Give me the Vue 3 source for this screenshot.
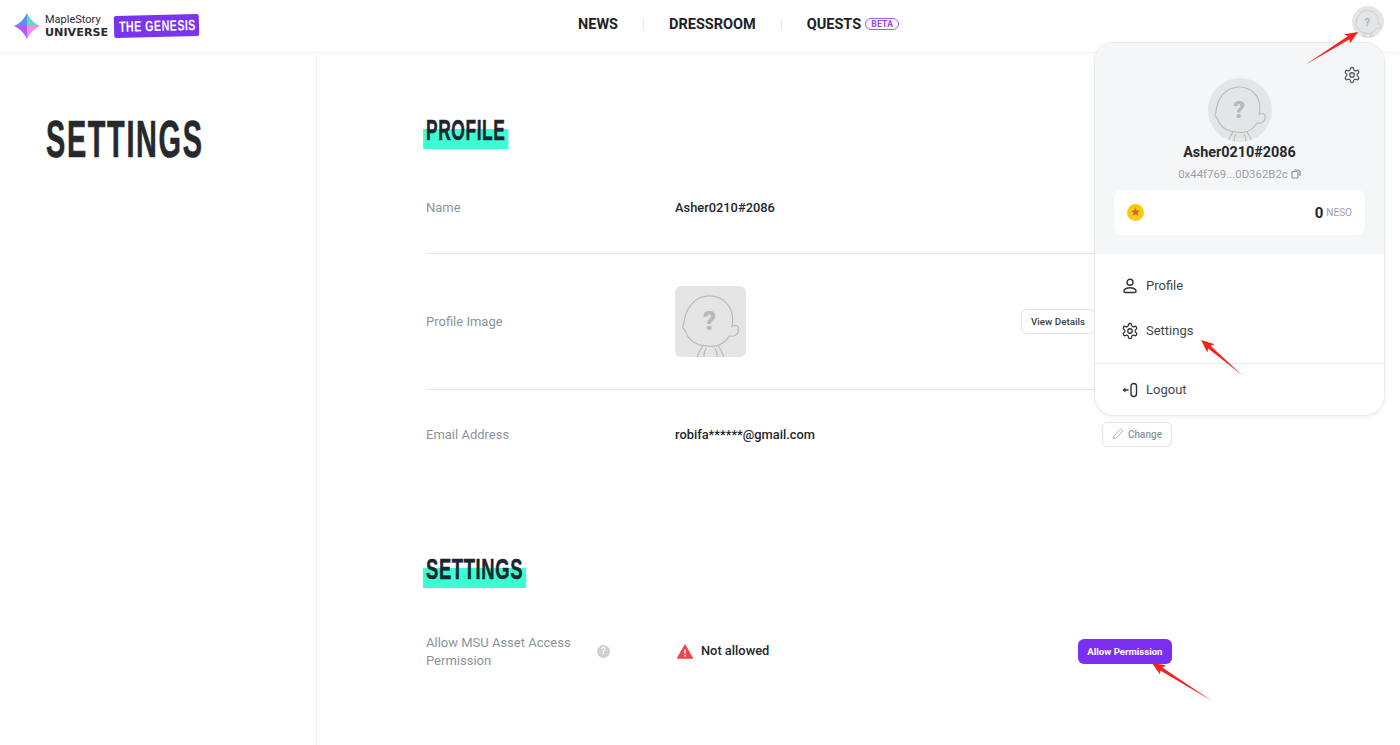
<template>
  <div class="page">
    <svg class="symbols" width="0" height="0">
      <symbol id="baby" viewBox="0 0 64 64">
        <path class="baby-line" d="M22 53C15 51 11 46 9 40 7 39 6 36 8 34 9 19 19 9 31 9c12 0 21 9 21 21 0 3 0 5-1 7 3-3 7-1 6 3 0 4-4 6-8 5-3 5-7 8-12 9-5 1-10 0-15-1z" />
        <path class="baby-line" d="M25 54l-3 5-2 5M39 54l3 5 2 5M28 56c-2 3-2 5-2 8M36 56c2 3 2 5 2 8" />
      </symbol>
      <symbol id="gear" viewBox="0 0 24 24">
        <path fill="none" stroke="currentColor" stroke-width="1.7" d="M12.22 2h-.44a2 2 0 0 0-2 2v.18a2 2 0 0 1-1 1.73l-.43.25a2 2 0 0 1-2 0l-.15-.08a2 2 0 0 0-2.73.73l-.22.38a2 2 0 0 0 .73 2.73l.15.1a2 2 0 0 1 1 1.72v.51a2 2 0 0 1-1 1.74l-.15.09a2 2 0 0 0-.73 2.73l.22.38a2 2 0 0 0 2.73.73l.15-.08a2 2 0 0 1 2 0l.43.25a2 2 0 0 1 1 1.73V20a2 2 0 0 0 2 2h.44a2 2 0 0 0 2-2v-.18a2 2 0 0 1 1-1.73l.43-.25a2 2 0 0 1 2 0l.15.08a2 2 0 0 0 2.73-.73l.22-.39a2 2 0 0 0-.73-2.73l-.15-.08a2 2 0 0 1-1-1.74v-.5a2 2 0 0 1 1-1.74l.15-.09a2 2 0 0 0 .73-2.73l-.22-.38a2 2 0 0 0-2.73-.73l-.15.08a2 2 0 0 1-2 0l-.43-.25a2 2 0 0 1-1-1.73V4a2 2 0 0 0-2-2z" />
        <circle cx="12" cy="12" r="3" fill="none" stroke="currentColor" stroke-width="1.7" />
      </symbol>
    </svg>

    <header class="topbar">
      <div class="logo">
        <svg class="logo-star" viewBox="0 0 26 26">
          <path d="M13 0Q9 9 0 13h13z" fill="#5a8ff6" />
          <path d="M13 0q4 9 13 13H13z" fill="#5fdcc0" />
          <path d="M26 13q-9 4-13 13V13z" fill="#f08cf2" />
          <path d="M0 13q9 4 13 13V13z" fill="#ab5ff2" />
        </svg>
        <div class="logo-words">
          <span class="logo-maple">MapleStory</span>
          <span class="logo-universe">UNIVERSE</span>
        </div>
        <div class="logo-tag"><span>THE GENESIS</span></div>
      </div>
      <nav class="nav">
        <a class="nav-link">NEWS</a>
        <i class="nav-sep"></i>
        <a class="nav-link">DRESSROOM</a>
        <i class="nav-sep"></i>
        <a class="nav-link">QUESTS</a>
        <span class="beta">BETA</span>
      </nav>
      <div class="avatar-small">
        <svg class="fill" viewBox="0 0 64 64">
          <use href="#baby" width="64" height="64" />
          <text x="31" y="40" class="baby-mark">?</text>
        </svg>
      </div>
    </header>

    <div class="body">
      <aside class="side">
        <h1 class="side-title">SETTINGS</h1>
      </aside>
      <main class="content">
        <section class="section">
          <h2 class="sec-title">PROFILE</h2>
          <div class="row row-name">
            <div class="row-label">Name</div>
            <div class="row-value">Asher0210#2086</div>
          </div>
          <div class="row row-image">
            <div class="row-label">Profile Image</div>
            <div class="profile-pic">
              <svg class="fill" viewBox="0 0 64 64">
                <use href="#baby" width="64" height="64" />
                <text x="31" y="40" class="baby-mark">?</text>
              </svg>
            </div>
            <div class="row-actions actions-under-menu">
              <button class="btn btn-details">View Details</button>
            </div>
          </div>
          <div class="row row-email">
            <div class="row-label">Email Address</div>
            <div class="row-value">robifa******@gmail.com</div>
            <div class="row-actions">
              <button class="btn btn-muted">
                <svg class="pencil" viewBox="0 0 12 12">
                  <path d="M1.5 10.5l.6-2.8L8 1.8c.5-.5 1.2-.5 1.7 0l.5.5c.5.5.5 1.2 0 1.7L4.300 9.900z" />
                </svg>
                Change
              </button>
            </div>
          </div>
        </section>

        <section class="section section-settings">
          <h2 class="sec-title sec-title-wide">SETTINGS</h2>
          <div class="row row-perm">
            <div class="row-label label-help">
              <span class="label-text">Allow MSU Asset Access Permission</span>
              <span class="help">?</span>
            </div>
            <div class="row-value status">
              <svg class="warn" viewBox="0 0 16 15">
                <path d="M8 .8L15.700 14.200H.3z" fill="#ef4452" stroke="#ef4452" stroke-linejoin="round" />
                <path d="M8 5.500v4.200M8 11v1.500" stroke="#fff" stroke-width="1.500" />
              </svg>
              Not allowed
            </div>
            <div class="row-actions">
              <button class="btn btn-primary">Allow Permission</button>
            </div>
          </div>
        </section>
      </main>
    </div>

    <div class="menu">
      <div class="menu-top">
        <svg class="menu-gear"><use href="#gear" /></svg>
        <div class="avatar-big">
          <svg class="fill" viewBox="0 0 64 64">
            <use href="#baby" width="64" height="64" />
            <text x="31" y="40" class="baby-mark">?</text>
          </svg>
        </div>
        <div class="menu-name">Asher0210#2086</div>
        <div class="menu-addr">
          0x44f769...0D362B2c
          <svg class="copy" viewBox="0 0 10 10">
            <rect x="1" y="2.500" width="6" height="6.500" rx="1" />
            <path d="M3 1h4.500L9 2.500V7" />
          </svg>
        </div>
        <div class="neso">
          <span class="coin">★</span>
          <span class="neso-amount">0</span>
          <span class="neso-unit">NESO</span>
        </div>
      </div>
      <div class="menu-list">
        <a class="menu-item">
          <svg class="menu-icon" viewBox="0 0 16 16">
            <circle cx="8" cy="4.300" r="3" />
            <path d="M3.500 14.500h9c1.200 0 1.700-.8 1.500-1.700-.5-1.800-2.800-3.100-6-3.100s-5.500 1.300-6 3.100c-.2.900.3 1.700 1.500 1.700z" />
          </svg>
          Profile
        </a>
        <a class="menu-item">
          <svg class="menu-icon gear-dark"><use href="#gear" /></svg>
          Settings
        </a>
      </div>
      <div class="menu-foot">
        <a class="menu-item">
          <svg class="menu-icon" viewBox="0 0 16 16">
            <path d="M6.500 8H2" />
            <path class="arrow-head" d="M3.500 5.500L.5 8l3 2.500z" />
            <rect x="9" y="1.500" width="5.500" height="13" rx="2.700" />
          </svg>
          Logout
        </a>
      </div>
    </div>

    <svg class="marks" width="1400" height="745">
      <polygon v-for="(a, i) in arrows" :key="i" :points="arrowPoints(a)" fill="#f5211c" />
    </svg>
  </div>
</template>

<script setup>
const arrows = [
  { from: [1305, 65], to: [1358, 32] },
  { from: [1242, 375], to: [1201, 340] },
  { from: [1212, 701], to: [1152, 663] }
]

// thin tail, fat head, with the small notch a screenshot tool draws
function arrowPoints({ from, to }) {
  const dx = to[0] - from[0]
  const dy = to[1] - from[1]
  const len = Math.hypot(dx, dy)
  const ux = dx / len
  const uy = dy / len
  const at = (back, side) => {
    const x = to[0] - ux * back - uy * side
    const y = to[1] - uy * back + ux * side
    return `${x.toFixed(1)},${y.toFixed(1)}`
  }
  return [
    `${from[0]},${from[1]}`,
    at(11, -1.8),
    at(13, -5.5),
    at(0, 0),
    at(13, 5.5),
    at(11, 1.8)
  ].join(' ')
}
</script>

<style>
html,
body {
  margin: 0;
  overflow: hidden;
  background: #fff;
}
</style>

<style scoped>
.page {
  position: relative;
  width: 1400px;
  height: 745px;
  overflow: hidden;
  background: #fff;
  font-family: Roboto, "Liberation Sans", sans-serif;
  color: #23272c;
}

.symbols {
  position: absolute;
}

.baby-line {
  fill: none;
  stroke: #b9babc;
  stroke-width: 1.1;
}

.baby-mark {
  font-family: Roboto, sans-serif;
  font-size: 23px;
  font-weight: 900;
  text-anchor: middle;
  fill: #b5b8bd;
}

.fill {
  display: block;
  width: 100%;
  height: 100%;
}

.topbar {
  display: flex;
  align-items: center;
  height: 53px;
  box-sizing: border-box;
  border-bottom: 1px solid #f0f1f2;
  padding-left: 14px;
  padding-right: 16px;
}

.logo {
  display: flex;
  align-items: center;
  width: 564px;
  flex: none;
}

.logo-star {
  width: 26px;
  height: 26px;
  flex: none;
}

.logo-words {
  display: flex;
  flex-direction: column;
  margin-left: 5px;
  width: 69px;
}

.logo-maple {
  font-size: 11px;
  line-height: 12px;
  color: #2b2b30;
}

.logo-universe {
  font-family: "DejaVu Sans", sans-serif;
  font-size: 11.200px;
  line-height: 13px;
  font-weight: 700;
  color: #2b2b30;
  white-space: nowrap;
}

.logo-tag {
  width: 85px;
  height: 22px;
  line-height: 22px;
  background: #7a34ee;
  border-radius: 2px;
  transform: rotate(-1.500deg);
  color: #fff;
}

.logo-tag span {
  display: inline-block;
  margin-left: 5px;
  font-family: "Liberation Sans", sans-serif;
  font-weight: 700;
  font-size: 15px;
  letter-spacing: 0.6px;
  white-space: nowrap;
  transform: scaleX(0.715);
  transform-origin: left center;
}

.nav {
  display: flex;
  align-items: center;
  margin-bottom: 4px;
}

.nav-link {
  font-size: 14.500px;
  font-weight: 700;
  color: #1e2226;
}

.nav-sep {
  width: 1px;
  height: 10px;
  margin: 2px 25px 0;
  background: #e4e5e7;
}

.beta {
  margin-left: 4px;
  width: 34px;
  height: 12px;
  box-sizing: border-box;
  border: 1px solid #9b5cf5;
  border-radius: 6px;
  font-size: 8.500px;
  line-height: 10px;
  font-weight: 700;
  letter-spacing: 0.3px;
  text-align: center;
  color: #8a45f0;
}

.avatar-small {
  margin-left: auto;
  margin-bottom: 8px;
  width: 32px;
  height: 32px;
  border-radius: 50%;
  background: #e4e5e6;
  overflow: hidden;
}

.body {
  display: flex;
  height: 692px;
}

.side {
  width: 317px;
  box-sizing: border-box;
  border-right: 1px solid #eff0f1;
  padding: 60px 0 0 46px;
  flex: none;
}

.side-title {
  margin: 0;
  font-family: "Liberation Sans", sans-serif;
  font-size: 52px;
  line-height: 52px;
  font-weight: 700;
  letter-spacing: 3px;
  color: #25292e;
  -webkit-text-stroke: 0.7px #25292e;
  transform: scaleX(0.555);
  transform-origin: left center;
  white-space: nowrap;
}

.content {
  width: 746px;
  margin-left: 109px;
}

.section {
  padding-top: 62px;
}

.section-settings {
  padding-top: 76px;
}

.sec-title {
  position: relative;
  display: inline-block;
  margin: 0;
  height: 32px;
  font-family: "Liberation Sans", sans-serif;
  font-size: 30px;
  line-height: 30px;
  font-weight: 700;
  letter-spacing: 1px;
  color: #1c2530;
  -webkit-text-stroke: 0.5px #1c2530;
  transform: scaleX(0.58);
  transform-origin: left center;
  white-space: nowrap;
  z-index: 0;
}

.sec-title-wide {
  transform: scaleX(0.615);
}

.sec-title::after {
  content: "";
  position: absolute;
  left: -5px;
  right: -5px;
  top: 14px;
  height: 20px;
  background: #3dfdd2;
  z-index: -1;
}

.row {
  display: grid;
  grid-template-columns: 249px 1fr auto;
  align-items: center;
  font-size: 13px;
}

.row + .row {
  border-top: 1px solid #e6e7e9;
}

.row-name {
  height: 92px;
  margin-top: 14px;
}

.row-image {
  height: 135px;
}

.row-email {
  height: 88px;
}

.row-perm {
  height: 62px;
  margin-top: 34px;
}

.row-label {
  padding-top: 1px;
  color: #8d939b;
  line-height: 18px;
}

.row-value {
  font-weight: 500;
  font-size: 12.850px;
  color: #23272c;
}

.label-help {
  display: flex;
  align-items: center;
}

.label-text {
  width: 160px;
}

.help {
  width: 13px;
  height: 13px;
  margin-left: 11px;
  border-radius: 50%;
  background: #cdd0d4;
  color: #fff;
  font-size: 9px;
  line-height: 13px;
  font-weight: 700;
  text-align: center;
}

.status {
  display: flex;
  align-items: center;
  gap: 8px;
  padding-left: 2px;
  margin-bottom: 2px;
}

.warn {
  width: 16px;
  height: 15px;
  margin-top: 3px;
}

.profile-pic {
  width: 71px;
  height: 71px;
  border-radius: 6px;
  background: #e5e5e6;
  overflow: hidden;
}

.row-actions {
  display: flex;
  gap: 8px;
}

.actions-under-menu {
  padding-right: 77px;
}

.btn {
  display: flex;
  align-items: center;
  height: 25px;
  padding: 0 9px;
  box-sizing: border-box;
  border: 1px solid #e3e5e8;
  border-radius: 5px;
  background: #fff;
  font-family: Roboto, sans-serif;
  font-size: 10px;
  font-weight: 500;
  color: #3a3f45;
}

.btn-details {
  font-size: 9.800px;
}

.btn-muted {
  gap: 4px;
  color: #8d939b;
}

.pencil {
  width: 12px;
  height: 12px;
  fill: none;
  stroke: #a3a8ae;
  stroke-width: 0.9;
}

.btn-primary {
  border: none;
  border-radius: 6px;
  padding: 0 9.500px;
  background: #7b2ff0;
  color: #fff;
  font-size: 9.600px;
  font-weight: 700;
}

.menu {
  position: absolute;
  left: 1094px;
  top: 42px;
  width: 291px;
  height: 374px;
  box-sizing: border-box;
  border: 1px solid #e9eaec;
  border-radius: 20px;
  background: #fff;
  overflow: hidden;
  box-shadow: 0 1px 4px rgba(0, 0, 0, 0.06);
}

.menu-top {
  position: relative;
  display: flex;
  flex-direction: column;
  align-items: center;
  height: 211px;
  padding-top: 35px;
  box-sizing: border-box;
  background: #f5f6f8;
}

.menu-gear {
  position: absolute;
  right: 23px;
  top: 23px;
  width: 18px;
  height: 18px;
  color: #555a60;
}

.avatar-big {
  width: 64px;
  height: 64px;
  border-radius: 50%;
  background: #e4e5e6;
  overflow: hidden;
}

.menu-name {
  margin-top: 2px;
  font-size: 14.400px;
  line-height: 18px;
  font-weight: 700;
  color: #25292e;
}

.menu-addr {
  display: flex;
  align-items: center;
  gap: 3px;
  margin-top: 5px;
  font-size: 11.400px;
  line-height: 14px;
  color: #9aa0a7;
}

.copy {
  width: 10px;
  height: 10px;
  fill: none;
  stroke: #8d939b;
  stroke-width: 1.200;
}

.neso {
  display: flex;
  align-items: center;
  width: 251px;
  height: 45px;
  margin-top: 9px;
  padding: 0 13px;
  box-sizing: border-box;
  border-radius: 8px;
  background: #fff;
}

.coin {
  width: 17px;
  height: 17px;
  border-radius: 50%;
  background: #fbc913;
  color: #d0603a;
  font-size: 12px;
  line-height: 17px;
  text-align: center;
}

.neso-amount {
  margin-left: auto;
  font-size: 15px;
  font-weight: 700;
  color: #23272c;
}

.neso-unit {
  margin-left: 3px;
  font-size: 10px;
  color: #9aa0a7;
}

.menu-list {
  padding: 9px 0 10px;
  border-bottom: 1px solid #ebecee;
}

.menu-item {
  display: flex;
  align-items: center;
  gap: 8px;
  height: 45px;
  padding-left: 27px;
  font-size: 13px;
  color: #43474d;
}

.menu-foot {
  padding-top: 3px;
}

.menu-icon {
  width: 16px;
  height: 16px;
  fill: none;
  stroke: #2f3338;
  stroke-width: 1.400;
  overflow: visible;
}

.arrow-head {
  fill: #2f3338;
  stroke: none;
}

.gear-dark {
  width: 18px;
  height: 18px;
  margin: 0 -1px;
  stroke: none;
  color: #2f3338;
}

.marks {
  position: absolute;
  left: 0;
  top: 0;
  pointer-events: none;
}
</style>
